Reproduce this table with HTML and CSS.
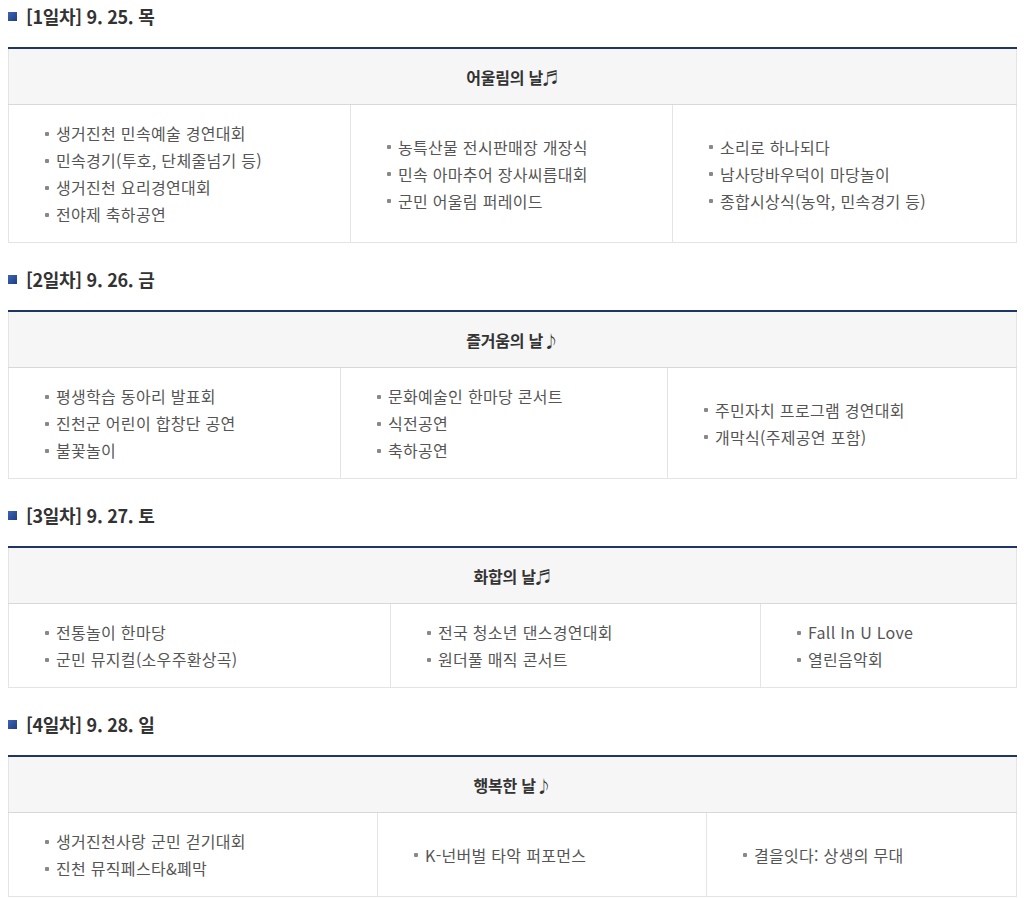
FILE: index.html
```html
<!DOCTYPE html>
<html lang="ko">
<head>
<meta charset="utf-8">
<title>일정</title>
<link rel="stylesheet" href="styles.css">
</head>
<body>
<section class="day">
  <h3 class="day-title"><span class="sq"></span>[1일차] 9. 25. 목</h3>
  <table class="sched t1">
    <colgroup><col class="c1"><col class="c2"><col class="c3"></colgroup>
    <thead><tr><th colspan="3">어울림의 날♬</th></tr></thead>
    <tbody><tr>
      <td><ul><li>생거진천 민속예술 경연대회</li><li>민속경기(투호, 단체줄넘기 등)</li><li>생거진천 요리경연대회</li><li>전야제 축하공연</li></ul></td>
      <td><ul><li>농특산물 전시판매장 개장식</li><li>민속 아마추어 장사씨름대회</li><li>군민 어울림 퍼레이드</li></ul></td>
      <td><ul><li>소리로 하나되다</li><li>남사당바우덕이 마당놀이</li><li>종합시상식(농악, 민속경기 등)</li></ul></td>
    </tr></tbody>
  </table>
</section>
<section class="day">
  <h3 class="day-title"><span class="sq"></span>[2일차] 9. 26. 금</h3>
  <table class="sched t2">
    <colgroup><col class="c1"><col class="c2"><col class="c3"></colgroup>
    <thead><tr><th colspan="3">즐거움의 날♪</th></tr></thead>
    <tbody><tr>
      <td><ul><li>평생학습 동아리 발표회</li><li>진천군 어린이 합창단 공연</li><li>불꽃놀이</li></ul></td>
      <td><ul><li>문화예술인 한마당 콘서트</li><li>식전공연</li><li>축하공연</li></ul></td>
      <td><ul><li>주민자치 프로그램 경연대회</li><li>개막식(주제공연 포함)</li></ul></td>
    </tr></tbody>
  </table>
</section>
<section class="day">
  <h3 class="day-title"><span class="sq"></span>[3일차] 9. 27. 토</h3>
  <table class="sched t3">
    <colgroup><col class="c1"><col class="c2"><col class="c3"></colgroup>
    <thead><tr><th colspan="3">화합의 날♬</th></tr></thead>
    <tbody><tr>
      <td><ul><li>전통놀이 한마당</li><li>군민 뮤지컬(소우주환상곡)</li></ul></td>
      <td><ul><li>전국 청소년 댄스경연대회</li><li>원더풀 매직 콘서트</li></ul></td>
      <td><ul><li>Fall In U Love</li><li>열린음악회</li></ul></td>
    </tr></tbody>
  </table>
</section>
<section class="day">
  <h3 class="day-title"><span class="sq"></span>[4일차] 9. 28. 일</h3>
  <table class="sched t4">
    <colgroup><col class="c1"><col class="c2"><col class="c3"></colgroup>
    <thead><tr><th colspan="3">행복한 날♪</th></tr></thead>
    <tbody><tr>
      <td><ul><li>생거진천사랑 군민 걷기대회</li><li>진천 뮤직페스타&amp;폐막</li></ul></td>
      <td><ul><li>K-넌버벌 타악 퍼포먼스</li></ul></td>
      <td><ul><li>결을잇다: 상생의 무대</li></ul></td>
    </tr></tbody>
  </table>
</section>
</body>
</html>
```
FILE: styles.css
```css
html, body {
  margin: 0;
  padding: 0;
  background: #fff;
}
body {
  padding: 4px 8px 0 8px;
  font-family: "Noto Sans CJK KR", "Noto Sans", sans-serif;
  color: #555;
}
.day {
  margin-bottom: 24px;
}
.day-title {
  display: flex;
  align-items: center;
  gap: 9px;
  margin: 0 0 19px 0;
  height: 24px;
  font-size: 18px;
  font-weight: 700;
  color: #333;
  letter-spacing: -0.3px;
}
.sq {
  width: 9px;
  height: 9px;
  background: linear-gradient(135deg, #3d64b3, #1f3f86);
  flex: none;
}
.sched {
  width: 1008px;
  border-collapse: collapse;
  table-layout: fixed;
  border-top: 2px solid #1e3566;
}
.sched th {
  background: #f6f6f6;
  height: 55px;
  padding: 0;
  font-size: 16px;
  font-weight: 700;
  color: #333;
  border: 1px solid #e4e4e4;
  border-top: none;
  border-bottom: 1px solid #d8d8d8;
  letter-spacing: -0.2px;
}
.sched td {
  border: 1px solid #e4e4e4;
  padding: 15px 20px 14px 36px;
  vertical-align: middle;
}
.sched ul {
  list-style: none;
  margin: 0;
  padding: 0;
}
.sched li {
  font-size: 16px;
  line-height: 27px;
  color: #555;
  letter-spacing: 0.3px;
  display: flex;
  align-items: center;
  white-space: nowrap;
}
.sched li::before {
  content: "";
  width: 4px;
  height: 4px;
  border-radius: 1px;
  background: #888;
  margin-right: 7px;
  flex: none;
}
.t1 .c1 { width: 342px; }
.t1 .c2 { width: 322px; }
.t1 .c3 { width: 344px; }
.t2 .c1 { width: 332px; }
.t2 .c2 { width: 327px; }
.t2 .c3 { width: 349px; }
.t3 .c1 { width: 382px; }
.t3 .c2 { width: 370px; }
.t3 .c3 { width: 256px; }
.t4 .c1 { width: 369px; }
.t4 .c2 { width: 329px; }
.t4 .c3 { width: 310px; }
```
